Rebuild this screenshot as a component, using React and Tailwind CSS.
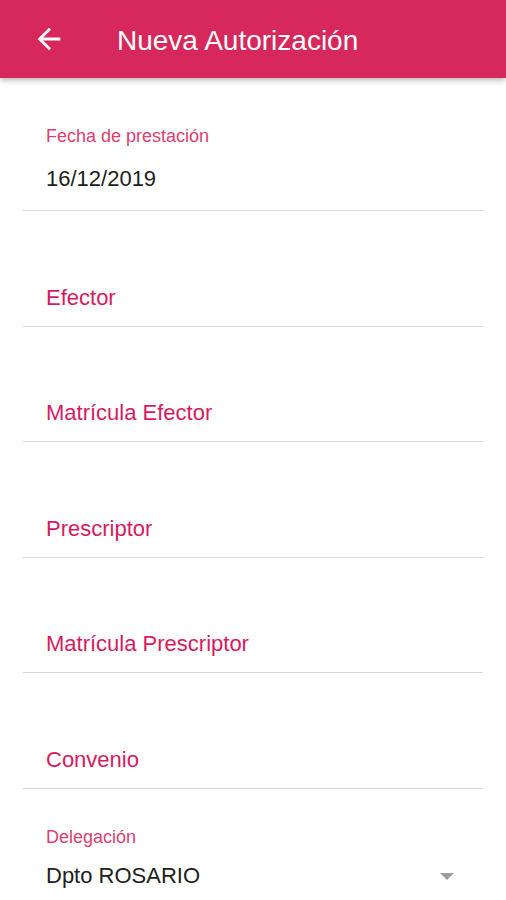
import React from "react";

const PINK = "text-[#d81b60]";

const fields = ["Efector", "Matrícula Efector", "Prescriptor", "Matrícula Prescriptor", "Convenio"];

// Empty text field, only the floating hint is shown
const EmptyField = ({ label }) => (
  <div className="h-[115.5px] flex flex-col justify-end pb-[15px] border-b border-[#d6d6d6]">
    <span className={`${PINK} text-[22px] leading-[26px] pl-[23px]`}>{label}</span>
  </div>
);

export default function App() {
  return (
    <div className="w-[506px] h-[900px] bg-white overflow-hidden" style={{ fontFamily: "'Liberation Sans', Arial, sans-serif" }}>
      <div className="relative z-10 h-[78px] bg-[#d6285c] flex items-center shadow-[0_2px_6px_rgba(0,0,0,0.3)]">
        <button className="ml-[31px] w-[36px] h-[36px] flex items-center justify-center">
          <svg width="34" height="34" viewBox="0 0 24 24" fill="white">
            <path d="M20 11H7.83l5.59-5.59L12 4l-8 8 8 8 1.41-1.41L7.83 13H20v-2z" />
          </svg>
        </button>
        <h1 className="ml-[50px] mt-[3px] text-white text-[28px] leading-none">Nueva Autorización</h1>
      </div>

      <div className="px-[23px]">
        {/* Fecha */}
        <div className="pt-[48px] pb-[18px] border-b border-[#d6d6d6]">
          <div className="text-[#dc3f72] text-[18px] leading-[21px] pl-[23px]">Fecha de prestación</div>
          <div className="mt-[19px] text-[22px] leading-[26px] text-[#212121] pl-[23px]">16/12/2019</div>
        </div>

        {fields.map((f) => (
          <EmptyField key={f} label={f} />
        ))}

        {/* Delegación */}
        <div className="pt-[38px]">
          <div className="text-[#dc3f72] text-[18px] leading-[21px] pl-[23px]">Delegación</div>
          <div className="mt-[15px] flex items-center justify-between">
            <span className="text-[22px] leading-[26px] text-[#212121] pl-[23px]">Dpto ROSARIO</span>
            <svg width="14" height="7" viewBox="0 0 14 7" className="mr-[29px] mt-[2px]">
              <path d="M0 0h14L7 7z" fill="#9e9e9e" />
            </svg>
          </div>
        </div>
      </div>
    </div>
  );
}
